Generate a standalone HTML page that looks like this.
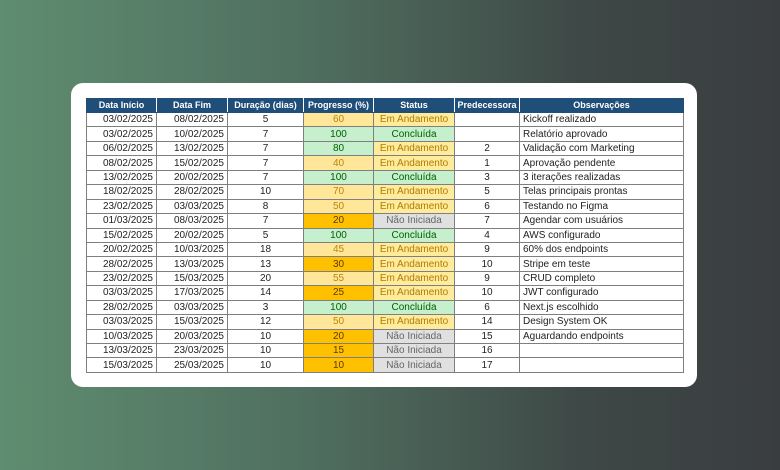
<!DOCTYPE html>
<html><head><meta charset="utf-8"><style>
html,body{margin:0;padding:0}
body{width:780px;height:470px;overflow:hidden;background:linear-gradient(90deg,#5f8d70 0%,#4f6e5f 40%,#3e4846 75%,#3a3d40 100%);position:relative;font-family:"Liberation Sans",sans-serif}
.card{position:absolute;left:71px;top:83px;width:626px;height:304px;background:#fff;border-radius:12px}
table{position:absolute;left:86px;top:98px;width:597px;border-collapse:collapse;font-size:10px;table-layout:fixed}
td,th{height:13.45px;padding:0;border:1px solid #7f7f7f;white-space:nowrap;overflow:hidden;line-height:13px;color:#222}
th{background:#1f4e79;color:#fff;font-weight:bold;border-color:#1f4e79;border-right:1px solid #fff;text-align:center;height:13px;font-size:9px}
th:last-child{border-right-color:#1f4e79}
td.r{text-align:right;padding-right:3px}td.c{text-align:center}
td.l{padding-left:3px}
.y{background:#ffe699;color:#b8860b;text-align:center}
.g{background:#c6efce;color:#006100;text-align:center}
.o{background:#ffc000;color:#5a3a00;text-align:center}
.sy{background:#ffeb9c;color:#b07b00;text-align:center}
.sn{background:#e0e0e0;color:#666;text-align:center}
</style></head><body>
<div class="card"></div>
<table>
<colgroup><col style="width:70px"><col style="width:71px"><col style="width:76px"><col style="width:70px"><col style="width:81px"><col style="width:65px"><col style="width:164px"></colgroup>
<tr><th>Data Início</th><th>Data Fim</th><th>Duração (dias)</th><th>Progresso (%)</th><th>Status</th><th>Predecessora</th><th>Observações</th></tr>
<tr><td class="r">03/02/2025</td><td class="r">08/02/2025</td><td class="c">5</td><td class="y">60</td><td class="sy">Em Andamento</td><td class="c"></td><td class="l">Kickoff realizado</td></tr>
<tr><td class="r">03/02/2025</td><td class="r">10/02/2025</td><td class="c">7</td><td class="g">100</td><td class="g">Concluída</td><td class="c"></td><td class="l">Relatório aprovado</td></tr>
<tr><td class="r">06/02/2025</td><td class="r">13/02/2025</td><td class="c">7</td><td class="g">80</td><td class="sy">Em Andamento</td><td class="c">2</td><td class="l">Validação com Marketing</td></tr>
<tr><td class="r">08/02/2025</td><td class="r">15/02/2025</td><td class="c">7</td><td class="y">40</td><td class="sy">Em Andamento</td><td class="c">1</td><td class="l">Aprovação pendente</td></tr>
<tr><td class="r">13/02/2025</td><td class="r">20/02/2025</td><td class="c">7</td><td class="g">100</td><td class="g">Concluída</td><td class="c">3</td><td class="l">3 iterações realizadas</td></tr>
<tr><td class="r">18/02/2025</td><td class="r">28/02/2025</td><td class="c">10</td><td class="y">70</td><td class="sy">Em Andamento</td><td class="c">5</td><td class="l">Telas principais prontas</td></tr>
<tr><td class="r">23/02/2025</td><td class="r">03/03/2025</td><td class="c">8</td><td class="y">50</td><td class="sy">Em Andamento</td><td class="c">6</td><td class="l">Testando no Figma</td></tr>
<tr><td class="r">01/03/2025</td><td class="r">08/03/2025</td><td class="c">7</td><td class="o">20</td><td class="sn">Não Iniciada</td><td class="c">7</td><td class="l">Agendar com usuários</td></tr>
<tr><td class="r">15/02/2025</td><td class="r">20/02/2025</td><td class="c">5</td><td class="g">100</td><td class="g">Concluída</td><td class="c">4</td><td class="l">AWS configurado</td></tr>
<tr><td class="r">20/02/2025</td><td class="r">10/03/2025</td><td class="c">18</td><td class="y">45</td><td class="sy">Em Andamento</td><td class="c">9</td><td class="l">60% dos endpoints</td></tr>
<tr><td class="r">28/02/2025</td><td class="r">13/03/2025</td><td class="c">13</td><td class="o">30</td><td class="sy">Em Andamento</td><td class="c">10</td><td class="l">Stripe em teste</td></tr>
<tr><td class="r">23/02/2025</td><td class="r">15/03/2025</td><td class="c">20</td><td class="y">55</td><td class="sy">Em Andamento</td><td class="c">9</td><td class="l">CRUD completo</td></tr>
<tr><td class="r">03/03/2025</td><td class="r">17/03/2025</td><td class="c">14</td><td class="o">25</td><td class="sy">Em Andamento</td><td class="c">10</td><td class="l">JWT configurado</td></tr>
<tr><td class="r">28/02/2025</td><td class="r">03/03/2025</td><td class="c">3</td><td class="g">100</td><td class="g">Concluída</td><td class="c">6</td><td class="l">Next.js escolhido</td></tr>
<tr><td class="r">03/03/2025</td><td class="r">15/03/2025</td><td class="c">12</td><td class="y">50</td><td class="sy">Em Andamento</td><td class="c">14</td><td class="l">Design System OK</td></tr>
<tr><td class="r">10/03/2025</td><td class="r">20/03/2025</td><td class="c">10</td><td class="o">20</td><td class="sn">Não Iniciada</td><td class="c">15</td><td class="l">Aguardando endpoints</td></tr>
<tr><td class="r">13/03/2025</td><td class="r">23/03/2025</td><td class="c">10</td><td class="o">15</td><td class="sn">Não Iniciada</td><td class="c">16</td><td class="l"></td></tr>
<tr><td class="r">15/03/2025</td><td class="r">25/03/2025</td><td class="c">10</td><td class="o">10</td><td class="sn">Não Iniciada</td><td class="c">17</td><td class="l"></td></tr>
</table>
</body></html>
